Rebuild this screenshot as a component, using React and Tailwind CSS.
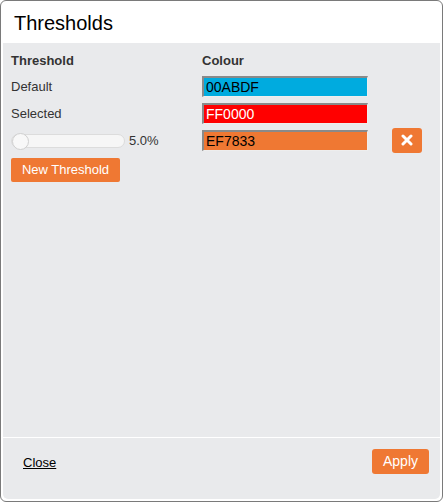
import React from 'react';

function ColourInput({ value, bg, text }) {
  return (
    <div
      className={`h-[21px] w-[166px] border-t-2 border-l-2 border-t-[#8a8a8a] border-l-[#8a8a8a] border-b border-r border-b-[#eee] border-r-[#eee] pl-[2px] text-[14px] leading-[19px] ${bg} ${text}`}
    >
      {value}
    </div>
  );
}

function App() {
  return (
    <div className="w-[443px] h-[502px] bg-white font-['Liberation_Sans',Arial,sans-serif] text-[#333]">
      <div className="h-full border border-[#7a7a7a] rounded-[6px] bg-white flex flex-col overflow-hidden">
        <div className="h-[42px] flex items-center pl-[13px] pt-[1px]">
          <h1 className="text-[20px] text-black">Thresholds</h1>
        </div>
        <div className="flex-1 mx-[2px] mb-[2px] bg-[#e9eaec] rounded-b-[5px] flex flex-col">
          <div className="flex-1 pl-[8px] pt-[10px]">
            <div className="flex text-[13px] font-bold h-[16px] leading-[16px]">
              <div className="w-[191px]">Threshold</div>
              <div>Colour</div>
            </div>
            <div className="flex items-center mt-[7px] h-[21px] text-[13px]">
              <div className="w-[191px]">Default</div>
              <ColourInput value="00ABDF" bg="bg-[#00abdf]" text="text-black" />
            </div>
            <div className="flex items-center mt-[6px] h-[21px] text-[13px]">
              <div className="w-[191px]">Selected</div>
              <ColourInput value="FF0000" bg="bg-[#ff0000]" text="text-white" />
            </div>
            <div className="flex items-center mt-[4px] h-[24px] text-[13px]">
              <div className="w-[191px] flex items-center pt-[1px]">
                <div className="relative w-[114px] h-[14px] rounded-full bg-[#f6f6f6] border border-[#dcdcdc]">
                  <div className="absolute left-0 top-[-2px] w-[17px] h-[17px] rounded-full bg-[#f8f8f8] border border-[#cfcfcf]" />
                </div>
                <span className="ml-[4px] text-[13px]">5.0%</span>
              </div>
              <ColourInput value="EF7833" bg="bg-[#ef7833]" text="text-black" />
              <button className="ml-[24px] w-[30px] h-[25px] rounded-[3px] bg-[#ef7833] flex items-center justify-center">
                <svg width="12" height="12" viewBox="0 0 12 12">
                  <path d="M2 2 L10 10 M10 2 L2 10" stroke="white" strokeWidth="3" strokeLinecap="round" />
                </svg>
              </button>
            </div>
            <button className="mt-[6px] w-[109px] h-[24px] rounded-[2px] bg-[#ef7833] text-white text-[13px]">
              New Threshold
            </button>
          </div>
          <div className="h-[62px] border-t border-white flex items-start justify-between pl-[20px] pr-[11px] pt-[11px]">
            <a className="mt-[4px] text-[13px] text-black underline">Close</a>
            <button className="w-[57px] h-[25px] rounded-[3px] bg-[#ef7833] text-white text-[14px]">Apply</button>
          </div>
        </div>
      </div>
    </div>
  );
}

export default App;
